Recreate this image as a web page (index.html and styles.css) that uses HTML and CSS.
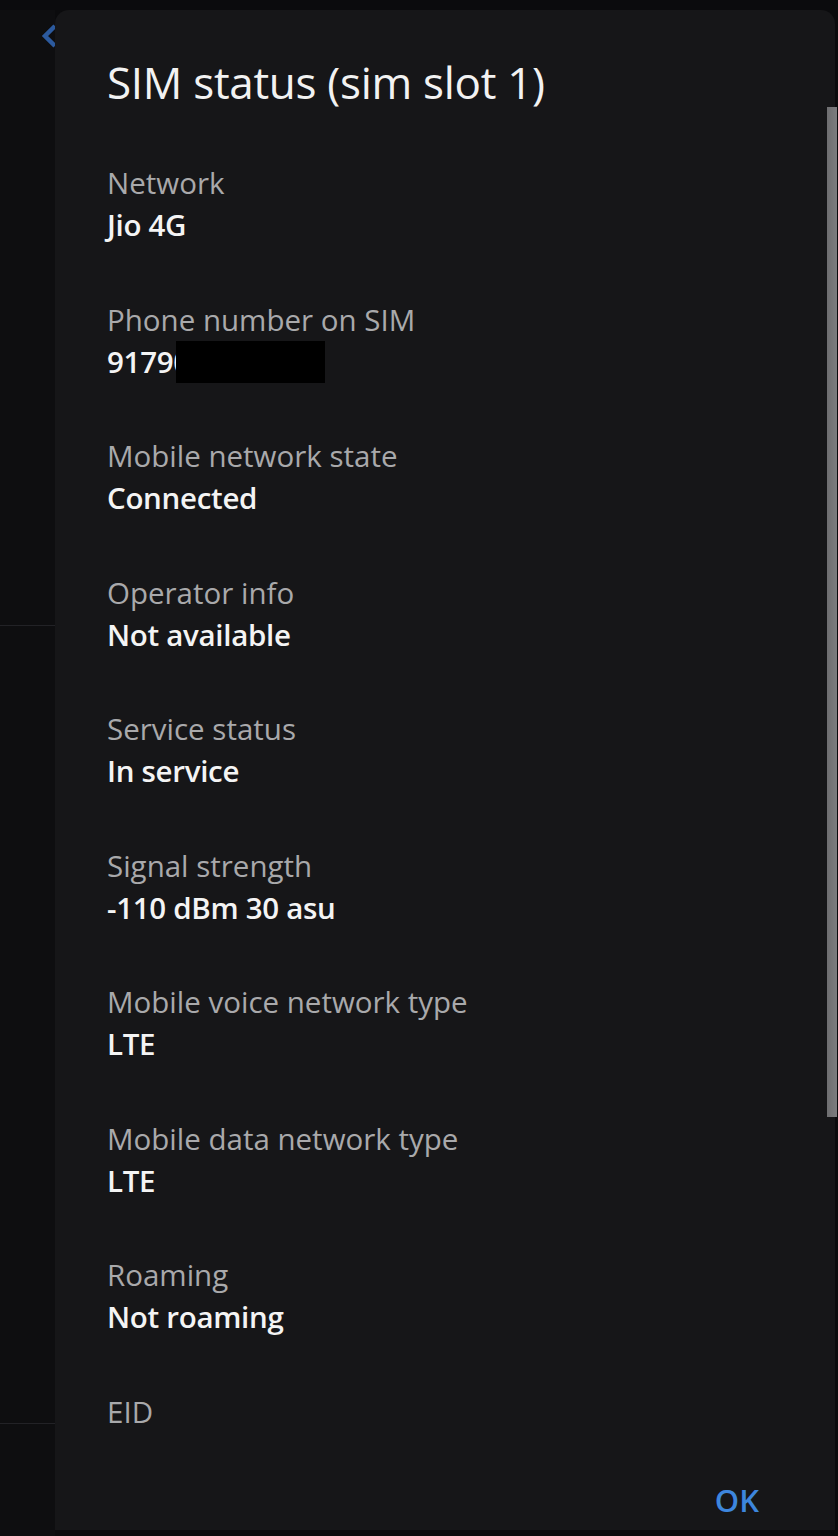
FILE: index.html
```html
<!DOCTYPE html>
<html>
<head>
<meta charset="utf-8">
<link rel="stylesheet" href="styles.css">
</head>
<body>
<div class="screen">
  <div class="behind">
    <svg class="back" width="18" height="28" viewBox="0 0 18 28"><path d="M16 4 L6 14 L16 24" fill="none" stroke="#2c5a9e" stroke-width="4.5"/></svg>
    <div class="rule rule1"></div>
    <div class="rule rule2"></div>
  </div>
  <div class="dialog">
    <h1 class="title">SIM status (sim slot 1)</h1>
    <div class="list">
      <div class="item"><div class="label">Network</div><div class="value">Jio 4G</div></div>
      <div class="item"><div class="label">Phone number on SIM</div><div class="value">91790<span class="redact"></span></div></div>
      <div class="item"><div class="label">Mobile network state</div><div class="value">Connected</div></div>
      <div class="item"><div class="label">Operator info</div><div class="value">Not available</div></div>
      <div class="item"><div class="label">Service status</div><div class="value">In service</div></div>
      <div class="item"><div class="label">Signal strength</div><div class="value">-110 dBm 30 asu</div></div>
      <div class="item"><div class="label">Mobile voice network type</div><div class="value">LTE</div></div>
      <div class="item"><div class="label">Mobile data network type</div><div class="value">LTE</div></div>
      <div class="item"><div class="label">Roaming</div><div class="value">Not roaming</div></div>
      <div class="item"><div class="label">EID</div></div>
    </div>
    <div class="actions"><span class="ok">OK</span></div>
    <div class="scrollbar"></div>
  </div>
</div>
</body>
</html>
```

FILE: styles.css
```css
html, body {
  margin: 0;
  padding: 0;
  background: #0b0b0d;
}
body {
  width: 838px;
  height: 1536px;
  overflow: hidden;
  font-family: "Open Sans", "Roboto", sans-serif;
}
.screen {
  display: flex;
  padding-top: 10px;
  height: 1536px;
  box-sizing: border-box;
}
.behind {
  width: 55px;
  flex: none;
  display: flex;
  flex-direction: column;
  background: #0e0e10;
}
.back {
  margin: 12px 0 0 39px;
}
.rule {
  height: 1px;
  background: #222226;
}
.rule1 { margin-top: 575px; }
.rule2 { margin-top: 797px; }
.dialog {
  position: relative;
  width: 780px;
  height: 1520px;
  flex: none;
  background: #161618;
  border-radius: 14px 14px 0 0;
  padding: 50px 0 0 52px;
  box-sizing: border-box;
  display: flex;
  flex-direction: column;
}
.title {
  margin: 0;
  font-weight: 500;
  font-size: 44px;
  line-height: 44px;
  color: #f2f2f2;
  letter-spacing: -0.3px;
}
.list {
  margin-top: 62px;
  display: flex;
  flex-direction: column;
  gap: 60.5px;
}
.item {
  display: flex;
  flex-direction: column;
  gap: 8px;
}
.label {
  font-size: 29.5px;
  line-height: 34px;
  color: #a9a9ab;
}
.value {
  font-size: 29.5px;
  line-height: 34px;
  color: #f4f4f4;
  font-weight: 600;
  letter-spacing: -0.3px;
  display: flex;
  align-items: center;
  height: 34px;
}
.redact {
  display: inline-block;
  width: 149px;
  height: 42px;
  background: #000;
  margin: -4px 0 -4px -14px;
}
.actions {
  margin-top: auto;
  margin-bottom: 12px;
  display: flex;
  justify-content: flex-end;
  padding-right: 76px;
}
.ok {
  color: #3d86dd;
  font-size: 31px;
  font-weight: 600;
  line-height: 36px;
}
.scrollbar {
  position: absolute;
  top: 97px;
  right: -2px;
  width: 10px;
  height: 1010px;
  background: linear-gradient(90deg, #6e6e70, #7d7d7f);
}
```
